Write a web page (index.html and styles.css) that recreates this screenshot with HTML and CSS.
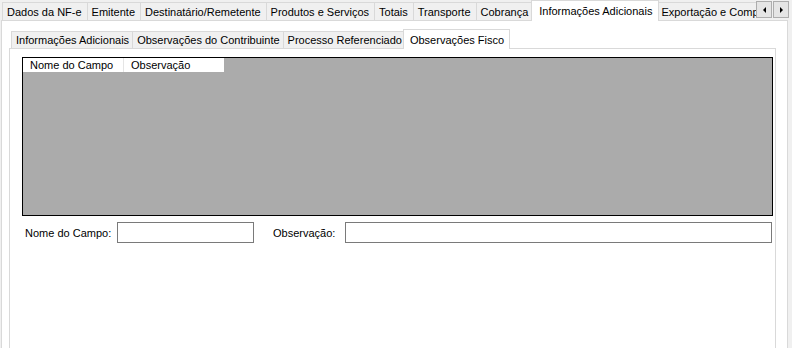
FILE: index.html
```html
<!DOCTYPE html>
<html>
<head>
    <title>Informações Adicionais</title>
    <link rel="stylesheet" href="styles.css">
</head>
<body>
    <div class="tabctl outer">
        <div class="strip">
            <div class="tabs">
                <div class="tab">Dados da NF-e</div>
                <div class="tab">Emitente</div>
                <div class="tab">Destinatário/Remetente</div>
                <div class="tab">Produtos e Serviços</div>
                <div class="tab">Totais</div>
                <div class="tab">Transporte</div>
                <div class="tab">Cobrança</div>
                <div class="tab active">Informações Adicionais</div>
                <div class="tab">Exportação e Compra</div>
            </div>
            <div class="scroll">
                <div class="scroll-btn"><span class="arrow left"></span></div>
                <div class="scroll-btn"><span class="arrow right"></span></div>
            </div>
        </div>
        <div class="page outer-page">
            <div class="tabctl inner">
                <div class="strip">
                    <div class="tabs">
                        <div class="tab">Informações Adicionais</div>
                        <div class="tab">Observações do Contribuinte</div>
                        <div class="tab">Processo Referenciado</div>
                        <div class="tab active">Observações Fisco</div>
                    </div>
                </div>
                <div class="page inner-page">
                    <div class="grid">
                        <div class="grid-head">
                            <div class="col">Nome do Campo</div>
                            <div class="col">Observação</div>
                        </div>
                    </div>
                    <div class="form-row">
                        <label class="lbl lbl-nome">Nome do Campo:</label>
                        <input type="text" class="txt txt-nome">
                        <label class="lbl lbl-obs">Observação:</label>
                        <input type="text" class="txt txt-obs">
                    </div>
                </div>
            </div>
        </div>
    </div>
</body>
</html>
```

FILE: styles.css
```css
body {
    margin: 0;
    background-color: #f0f0f0;
    font-family: "Liberation Sans", Arial, sans-serif;
    font-size: 11px;
    color: #000;
    height: 348px;
    overflow: hidden;
}
.tabctl {
    display: flex;
    flex-direction: column;
}
.outer {
    width: 787px;
    margin-left: 1px;
    height: 348px;
}
.strip {
    display: flex;
    box-shadow: inset 0 -1px #d9d9d9;
}
.outer > .strip {
    height: 21px;
    padding-left: 1px;
}
.tabs {
    display: flex;
    align-items: flex-end;
    flex: 1;
    overflow: hidden;
    white-space: nowrap;
}
.tab {
    flex: none;
    background-color: #f0f0f0;
    border: 1px solid #d9d9d9;
    border-bottom: none;
    margin-left: -1px;
    margin-bottom: 1px;
    padding: 1px 5px 0 4px;
    line-height: 16px;
}
.tab:first-child {
    margin-left: 0;
}
.tab.active {
    background-color: #fff;
    margin: 0 -2px 0 -3px;
    padding: 0 6px 0 7px;
    line-height: 20px;
    position: relative;
    z-index: 1;
}
.scroll {
    display: flex;
    align-self: flex-start;
    margin-top: 1px;
    margin-right: -1px;
    gap: 1px;
}
.scroll-btn {
    width: 14px;
    height: 15px;
    background-color: #e5e5e5;
    border: 1px solid #adadad;
    display: flex;
    align-items: center;
    justify-content: center;
}
.arrow {
    width: 0;
    height: 0;
    border-top: 3px solid transparent;
    border-bottom: 3px solid transparent;
}
.arrow.left {
    border-right: 3px solid #000;
}
.arrow.right {
    border-left: 3px solid #000;
}
.page {
    flex: 1;
    min-height: 0;
    background-color: #fff;
    border-left: 1px solid #d9d9d9;
    border-right: 1px solid #d9d9d9;
}
.outer-page {
    display: flex;
    padding: 8px 11px 0 7px;
}
.inner {
    flex: 1;
}
.inner > .strip {
    height: 20px;
    padding-left: 2px;
}
.inner .tab {
    padding: 1px 3px 0 4px;
    line-height: 15px;
}
.inner .tab.active {
    padding: 1px 5px 0 6px;
    line-height: 18px;
}
.inner-page {
    padding: 8px 2px 0 12px;
}
.grid {
    height: 157px;
    background-color: #ababab;
    border: 1px solid #000;
}
.grid-head {
    display: flex;
    height: 14px;
    line-height: 14px;
    overflow: hidden;
}
.col {
    width: 93px;
    padding-left: 7px;
    background-color: #fff;
    border-right: 1px solid #e5e5e5;
}
.col:last-child {
    border-right: none;
}
.form-row {
    display: flex;
    align-items: center;
    margin-top: 6px;
}
.lbl {
    flex: none;
}
.lbl-nome {
    width: 92px;
    margin-left: 3px;
}
.lbl-obs {
    width: 72px;
    margin-left: 19px;
}
.txt {
    box-sizing: border-box;
    height: 21px;
    border: 1px solid #7a7a7a;
    margin: 0;
    padding: 0 3px;
    font: inherit;
    outline: none;
}
.txt-nome {
    width: 137px;
}
.txt-obs {
    flex: 1;
    margin-right: 1px;
}
```
